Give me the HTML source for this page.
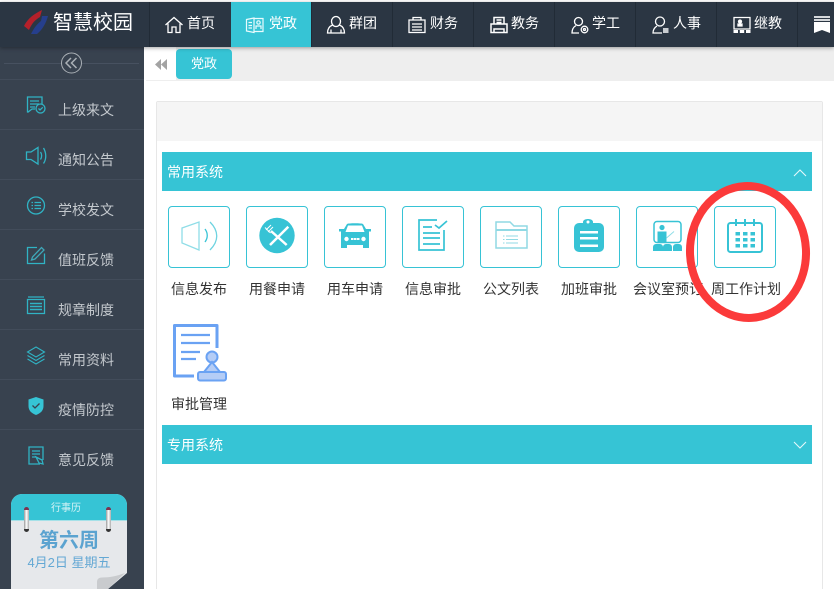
<!DOCTYPE html>
<html><head><meta charset="utf-8">
<style>
*{margin:0;padding:0;box-sizing:border-box}
html,body{width:834px;height:589px;overflow:hidden;background:#fff;font-family:"Liberation Sans","Noto Sans CJK SC",sans-serif}
#page{position:relative;width:834px;height:589px;overflow:hidden}
.a{position:absolute}
#top{left:0;top:2px;width:834px;height:45px;background:#2b3643;box-shadow:0 1px 4px rgba(0,0,0,.35);z-index:5;overflow:hidden}
.nav{position:absolute;top:0;height:45px;width:81px;border-left:1px solid #212b36;color:#fff;font-size:14px;line-height:42px}
.nav span{position:absolute;left:37px;top:0;white-space:nowrap}
.nav svg{position:absolute;left:14px;top:13px}
#side{left:0;top:47px;width:144px;height:542px;background:#38424f}
.si{position:absolute;left:0;width:144px;height:50px;border-bottom:1px solid #424c5a;color:#c3c8cd;font-size:14px}
.si span{position:absolute;left:58px;top:20px;line-height:20px;white-space:nowrap}
.si svg{position:absolute;left:26px;top:16px}
.tile{position:absolute;top:206px;width:62px;height:62px;border:1px solid #37c3d5;border-radius:4px;background:#fff}
.tile svg{position:absolute;left:0;top:0}
.lb{position:absolute;top:280px;width:78px;text-align:center;font-size:14px;line-height:18px;color:#333;white-space:nowrap}
.bar{position:absolute;left:162px;width:650px;height:39px;background:#36c4d5;color:#fff;font-size:14px;line-height:40px;padding-left:5px}
</style></head><body><div id="page">
<div class="a" id="top">
  <svg class="a" style="left:22px;top:6px" width="28" height="28" viewBox="0 0 28 28"><path d="M2 18C6 10 12 6 20 2L18 9C13 12 10 15 7 22Z" fill="#b5202a"/><path d="M9 26C12 20 15 16 19 13L20 8L26 8C24 15 21 21 15 26Z" fill="#263f8c"/></svg>
  <div class="a" style="left:53px;top:5px;font-size:20px;line-height:32px;color:#fff;white-space:nowrap">智慧校园</div>
  <div class="nav" style="left:149px"><svg width="20" height="20" viewBox="0 0 20 20" fill="none" stroke="#fff" stroke-width="1.300"><path d="M1.500 10L10 2.500L18.500 10M4 8.500V17.500H8V12H12V17.500H16V8.500"/></svg><span>首页</span></div>
  <div class="nav" style="left:231px;width:80px;background:#36c4d5;border:0"><svg style="left:14px" width="20" height="20" viewBox="0 0 20 20" fill="none" stroke="#e9fbfd" stroke-width="1.200"><path d="M1.500 4.500L9 3V17.500L1.500 16ZM9 3.500H18V16.500H9"/><circle cx="13.500" cy="7.500" r="1.700"/><path d="M11 14V11H16V14M3.500 7.500H7M3.500 10.500H7M3.500 13H7"/></svg><span style="left:38px">党政</span></div>
  <div class="nav" style="left:311px"><svg width="20" height="20" viewBox="0 0 20 20" fill="none" stroke="#fff" stroke-width="1.300"><ellipse cx="10" cy="6.500" rx="4.500" ry="5"/><path d="M6.500 10C3 11.500 1.500 14 1.500 18H18.500C18.500 14 17 11.500 13.500 10"/><path d="M5 14.500V18M15 14.500V18"/></svg><span>群团</span></div>
  <div class="nav" style="left:392px"><svg width="20" height="20" viewBox="0 0 20 20" fill="none" stroke="#fff" stroke-width="1.300"><path d="M2 5H18V17.500H2Z"/><path d="M6 5V2.500H14V5M5 9H15M5 12H15M5 15H15"/></svg><span>财务</span></div>
  <div class="nav" style="left:473px"><svg style="left:15px" width="20" height="20" viewBox="0 0 20 20" fill="none" stroke="#fff" stroke-width="1.500"><path d="M5 9V2.500H15V9M2 9H18V17.500H2ZM5 14H15V17.500H5ZM7.500 5H12.500M7.500 7.500H12.500"/></svg><span>教务</span></div>
  <div class="nav" style="left:554px"><svg style="left:15px" width="20" height="20" viewBox="0 0 20 20" fill="none" stroke="#fff" stroke-width="1.300"><circle cx="8.500" cy="6.500" r="4"/><path d="M6 10.500C3.500 12 2 14.500 2 18H9"/><circle cx="14.500" cy="14.500" r="3.300"/><circle cx="14.500" cy="14.500" r="1"/></svg><span>学工</span></div>
  <div class="nav" style="left:635px"><svg style="left:15px" width="20" height="20" viewBox="0 0 20 20" fill="none" stroke="#fff" stroke-width="1.300"><circle cx="9" cy="6.500" r="4.500"/><path d="M6 11C3.500 12.500 2 15 2 18H11"/><path d="M12 13H17.500V18H12Z" fill="#c8ccd0" stroke="none"/></svg><span>人事</span></div>
  <div class="nav" style="left:716px"><svg style="left:15px" width="20" height="20" viewBox="0 0 20 20" fill="none" stroke="#fff" stroke-width="1.300"><path d="M2 2.500H18V14H2Z"/><circle cx="8" cy="6.500" r="1.500" fill="#fff"/><path d="M6 11V9H10V11Z" fill="#fff"/><path d="M1.500 15H6V18H1.500ZM7.800 15H12.200V18H7.800ZM14 15H18.500V18H14Z" fill="#fff" stroke="none"/></svg><span>继教</span></div>
  <div class="nav" style="left:797px"><svg style="left:15px;top:14px" width="18" height="18" viewBox="0 0 18 18"><path d="M1 0H17V2H1ZM1 3H17V5H1Z" fill="#d5d8db"/><path d="M1 6H17V17L9 14L1 17Z" fill="#fff"/></svg></div>
</div>

<div class="a" id="side">
  <div class="a" style="left:4px;top:16px;width:135px;height:1px;background:#475160"></div>
  <div class="a" style="left:0;top:32px;width:144px;height:1px;background:#424c5a"></div>
  <svg class="a" style="left:60px;top:5px" width="23" height="22" viewBox="0 0 23 22" fill="#38424f" stroke="#aab0b6" stroke-width="1"><circle cx="11.500" cy="11" r="10"/><path d="M11 6L6 11L11 16M16.500 6L11.500 11L16.500 16" fill="none" stroke-width="1.500"/></svg>
  <div class="si" style="top:33px"><svg width="22" height="24" viewBox="0 0 22 24" fill="none" stroke="#30b3c4" stroke-width="1.300"><path d="M1.500 16.500V1H16V8M1.500 16.500L6 13H9"/><path d="M4 5H13M4 8H13M4 11H9"/><circle cx="14.500" cy="12.500" r="4.500"/><path d="M12.500 12.500L14 14L16.800 11.300"/></svg><span>上级来文</span></div>
  <div class="si" style="top:83px"><svg style="left:25px" width="24" height="24" viewBox="0 0 24 24" fill="none" stroke="#30b3c4" stroke-width="1.300"><path d="M1.500 6H6L13 1.500V18L6 13.500H1.500Z"/><path d="M15.500 6C17 8 17 11.500 15.500 13.500M18.500 2C21.500 7 21.500 13 18.500 17.500"/></svg><span>通知公告</span></div>
  <div class="si" style="top:133px"><svg width="22" height="24" viewBox="0 0 22 24" fill="none" stroke="#30b3c4" stroke-width="1.300"><circle cx="10" cy="9.500" r="8.500"/><path d="M8.500 6.500H15M8.500 9.500H15M8.500 12.500H15M5.500 6.500H7M5.500 9.500H7M5.500 12.500H7"/></svg><span>学校发文</span></div>
  <div class="si" style="top:183px"><svg width="22" height="24" viewBox="0 0 22 24" fill="none" stroke="#30b3c4" stroke-width="1.300"><path d="M11 1.500H1.500V17.500H18.500V7.500"/><path d="M5.500 14L6.500 11L15.500 1.500L18 4L9 13Z" stroke="#3fa7b8"/></svg><span>值班反馈</span></div>
  <div class="si" style="top:233px"><svg width="22" height="24" viewBox="0 0 22 24" fill="none" stroke="#30b3c4" stroke-width="1.300"><path d="M2 1H18M1.500 3.500H18.500V17.500H1.500Z"/><path d="M4 7.500H16M4 10.500H16M4 13.500H16" stroke-width="1.600"/></svg><span>规章制度</span></div>
  <div class="si" style="top:283px"><svg width="22" height="24" viewBox="0 0 22 24" fill="none" stroke="#30b3c4" stroke-width="1.100"><path d="M10 1L18.500 6L10 11L1.500 6Z"/><path d="M1.500 9.500L10 14.500L18.500 9.500M1.500 13L10 18L18.500 13"/></svg><span>常用资料</span></div>
  <div class="si" style="top:333px"><svg style="left:28px" width="20" height="24" viewBox="0 0 20 24"><path d="M8 1L15.500 3.500V10C15.500 15 12 17.500 8 19C4 17.500 .5 15 .5 10V3.500Z" fill="#36c4d5"/><path d="M4.500 9.500L7 12L11.500 7.500" fill="none" stroke="#38424f" stroke-width="1.300"/></svg><span>疫情防控</span></div>
  <div class="si" style="top:383px;border:0"><svg style="left:28px" width="20" height="24" viewBox="0 0 20 24" fill="none" stroke="#30b3c4" stroke-width="1.300"><path d="M12 18H1V1H15V14"/><path d="M4 5H12M4 8H12M4 11H8"/><path d="M8 11L14 14L15 18L11 17Z"/></svg><span>意见反馈</span></div>
  <div class="a" style="left:11px;top:447px;width:116px;height:95px;background:#e6e8eb;border-radius:11px 11px 0 0;overflow:hidden">
    <div class="a" style="left:0;top:0;width:116px;height:27px;background:#36c4d5;border-bottom:1px solid #a5e1e8"></div>
    <div class="a" style="left:0;top:8px;width:110px;text-align:center;color:#d5f3f6;font-size:10px;line-height:14px">行事历</div>
    <div class="a" style="left:13px;top:13px;width:5px;height:25px;background:linear-gradient(90deg,#999,#fff 50%,#aaa);border-radius:3px;border-top:3px solid #7d3350;border-bottom:3px solid #333"></div>
    <div class="a" style="left:95px;top:13px;width:5px;height:25px;background:linear-gradient(90deg,#999,#fff 50%,#aaa);border-radius:3px;border-top:3px solid #7d3350;border-bottom:3px solid #333"></div>
    <div class="a" style="left:0;top:35px;width:116px;text-align:center;color:#5ba3d0;font-size:20px;line-height:24px;font-weight:bold">第六周</div>
    <div class="a" style="left:0;top:60px;width:116px;text-align:center;color:#64a8d4;font-size:13px;line-height:18px;white-space:nowrap">4月2日 星期五</div>
    <svg class="a" style="left:86px;top:79px" width="30" height="16" viewBox="0 0 30 16"><path d="M30 0V16H11Z" fill="#38424f"/><path d="M0 16V9C0 6 2 4.500 5 4.500C13 4.500 20 3 28 0L11 16Z" fill="#c9cbce"/></svg>
  </div>
</div>

<div class="a" style="left:146px;top:47px;width:688px;height:34px;background:#eee"></div>
<div class="a" style="left:144px;top:47px;width:32px;height:33px;background:#fff"></div>
<svg class="a" style="left:155px;top:59px" width="12" height="11" viewBox="0 0 12 11"><path d="M6 0V11L0 5.500ZM12 0V11L6 5.500Z" fill="#a3a3a3"/></svg>
<div class="a" style="left:176px;top:49px;width:56px;height:30px;background:#36c4d5;border-radius:4px;color:#fff;font-size:13px;line-height:29px;text-align:center">党政</div>

<div class="a" style="left:156px;top:101px;width:667px;height:488px;background:#fff;border:1px solid #e7e7e7;border-bottom:0;border-radius:2px 2px 0 0"></div>
<div class="a" style="left:157px;top:102px;width:665px;height:39px;background:#f5f5f5"></div>

<div class="bar" style="top:152px">常用系统<svg class="a" style="left:631px;top:16px" width="14" height="9" viewBox="0 0 14 9"><path d="M1 8L7 2L13 8" fill="none" stroke="#e4f8fa" stroke-width="1.100"/></svg></div>

<div class="tile" style="left:168px"><svg width="60" height="60" viewBox="0 0 60 60" fill="none" stroke="#8fdde7" stroke-width="1.300"><path d="M13 21L30 15V43L13 36Z"/><path d="M36 22C39 26 39 31 36 35" stroke="#37c3d5"/><path d="M41 15C50 24 50 34 41 43" stroke="#6ed3e0"/></svg></div>
<div class="tile" style="left:246px"><svg width="60" height="60" viewBox="0 0 60 60"><circle cx="30" cy="28.500" r="17.700" fill="#37c3d5"/><path d="M41.300 19.700L23 38M24 24L39.700 38" stroke="#fff" stroke-width="2.500" fill="none"/><path d="M19 23L24 18M21 25L26 20M18 20.500L23.500 26" stroke="#fff" stroke-width="1"/></svg></div>
<div class="tile" style="left:324px"><svg width="60" height="60" viewBox="0 0 60 60"><path d="M19 22L22 17C23 16 37 16 38 17L41 22H46V24.500H44V41H38V38H22V41H16V24.500H14V22Z" fill="#37c3d5"/><path d="M23 18.500H37L39.500 25H20.500Z" fill="#fff"/><circle cx="21.500" cy="32" r="2.200" fill="#fff"/><circle cx="38.500" cy="32" r="2.200" fill="#fff"/><path d="M26 31H28.500V33H26ZM29 31H31.500V33H29ZM32 31H34.500V33H32Z" fill="#fff"/></svg></div>
<div class="tile" style="left:402px"><svg width="60" height="60" viewBox="0 0 60 60" fill="none" stroke="#37c3d5" stroke-width="1.700"><path d="M34 13H16V43H41V23"/><path d="M20 20H29M20 26H37M20 31H37M20 37H37" stroke-width="1.800"/><path d="M32 18L36 21L44 14"/></svg></div>
<div class="tile" style="left:480px"><svg width="60" height="60" viewBox="0 0 60 60" fill="none" stroke="#90d9e4" stroke-width="1.500"><path d="M15 41V15H29L33 19H46V41Z"/><path d="M15 23H46" stroke-width="2"/><path d="M25 29H37M25 32.500H37M25 36H37M22 29H23.500M22 32.500H23.500M22 36H23.500" stroke-width="1.100"/></svg></div>
<div class="tile" style="left:558px"><svg width="60" height="60" viewBox="0 0 60 60"><rect x="15" y="16" width="30" height="29" rx="5" fill="#37c3d5"/><path d="M24 21V15C24 11 34 11 34 15V21Z" fill="#37c3d5"/><circle cx="29" cy="15" r="1.500" fill="#fff"/><path d="M21 24H39V26.500H21ZM21 30H39V32.500H21ZM21 37.500H39V40H21Z" fill="#fff"/></svg></div>
<div class="tile" style="left:636px"><svg width="60" height="60" viewBox="0 0 60 60"><rect x="17" y="14.500" width="27" height="21" rx="3" fill="none" stroke="#37c3d5" stroke-width="1.500"/><circle cx="25" cy="20.500" r="2.600" fill="#37c3d5"/><path d="M20.500 24.500H29.500V35H20.500Z" fill="#37c3d5"/><path d="M29.500 31L37 24.500" stroke="#8fdde7"/><path d="M16 44V40A3 3 0 0 1 19 37H23A3 3 0 0 1 26 40V44ZM26 44V40A3 3 0 0 1 29 37H32A3 3 0 0 1 35 40V44ZM36 44V40A3 3 0 0 1 39 37H42A3 3 0 0 1 45 40V44Z" fill="#37c3d5"/></svg></div>
<div class="tile" style="left:714px"><svg width="60" height="60" viewBox="0 0 60 60"><rect x="13" y="16" width="34" height="29" rx="2.500" fill="none" stroke="#37c3d5" stroke-width="2"/><path d="M21 12V19M30 12V19M39 12V19" stroke="#37c3d5" stroke-width="2"/><path d="M20.500 25H25V28.500H20.500ZM28 25H32.500V28.500H28ZM35.500 25H40V28.500H35.500ZM20.500 31H25V34.500H20.500ZM28 31H32.500V34.500H28ZM35.500 31H40V34.500H35.500ZM20.500 37H25V40.500H20.500ZM28 37H32.500V40.500H28ZM35.500 37H40V40.500H35.500Z" fill="#37c3d5"/></svg></div>

<div class="lb" style="left:160px">信息发布</div>
<div class="lb" style="left:238px">用餐申请</div>
<div class="lb" style="left:316px">用车申请</div>
<div class="lb" style="left:394px">信息审批</div>
<div class="lb" style="left:472px">公文列表</div>
<div class="lb" style="left:550px">加班审批</div>
<div class="lb" style="left:629px">会议室预订</div>
<div class="lb" style="left:707px">周工作计划</div>

<svg class="a" style="left:170px;top:322px" width="60" height="62" viewBox="0 0 60 62"><path d="M24 54H4.500V3.500H47V26" fill="none" stroke="#6aa2f3" stroke-width="3" stroke-linejoin="round"/><path d="M11 13H40M11 21H40M11 30H30M11 37H26" fill="none" stroke="#6aa2f3" stroke-width="2.200"/><circle cx="42" cy="35" r="5.500" fill="#b5cdf6" stroke="#6aa2f3" stroke-width="2"/><path d="M42 40L34 50H50Z" fill="#b5cdf6" stroke="#6aa2f3" stroke-width="2"/><rect x="28" y="50" width="28" height="8.500" rx="2" fill="#b5cdf6" stroke="#6aa2f3" stroke-width="2"/></svg>
<div class="lb" style="left:160px;top:395px">审批管理</div>

<div class="bar" style="top:425px">专用系统<svg class="a" style="left:631px;top:16px" width="14" height="9" viewBox="0 0 14 9"><path d="M1 1L7 7L13 1" fill="none" stroke="#e4f8fa" stroke-width="1.100"/></svg></div>

<svg class="a" style="left:680px;top:175px;z-index:9" width="140" height="155" viewBox="0 0 140 155"><ellipse cx="68" cy="77" rx="58" ry="66" transform="rotate(-3 68 77)" fill="none" stroke="#fb3a3a" stroke-width="8"/></svg>
</div></body></html>
